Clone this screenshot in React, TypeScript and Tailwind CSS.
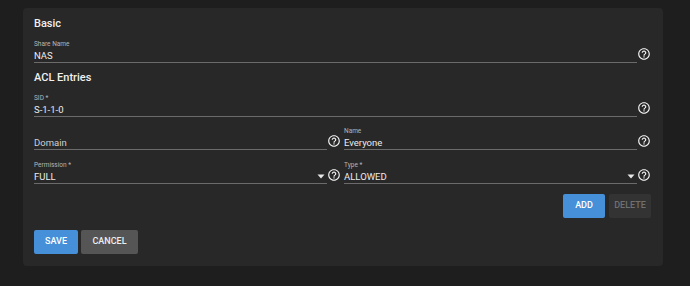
const HELP_PATH =
  "M11 18h2v-2h-2v2zm1-16C6.48 2 2 6.48 2 12s4.48 10 10 10 10-4.48 10-10S17.52 2 12 2zm0 18c-4.41 0-8-3.59-8-8s3.59-8 8-8 8 3.59 8 8-3.59 8-8 8zm0-14c-2.21 0-4 1.79-4 4h2c0-1.1.9-2 2-2s2 .9 2 2c0 2-3 1.75-3 5h2c0-2.25 3-2.5 3-5 0-2.21-1.79-4-4-4z"

function HelpIcon() {
  return (
    <span className="w-[14px] h-[14px] mb-[2px] shrink-0 flex items-center justify-center">
      <svg viewBox="0 0 24 24" width="14" height="14" fill="#f4f4f4">
        <path d={HELP_PATH} />
      </svg>
    </span>
  )
}

type FieldProps = {
  label?: string
  value: string
  placeholder?: boolean
  select?: boolean
}

function Field({ label, value, placeholder = false, select = false }: FieldProps) {
  return (
    <div className="flex items-end flex-1 min-w-0">
      <div className="flex-1 min-w-0 border-b border-[#6b6b6b]">
        <div className="h-[10px] leading-[10px] text-[6.5px] text-[#b5b5b5]">{label ?? ""}</div>
        <div className="h-[13px] flex items-center justify-between">
          <span className={`text-[9.5px] leading-[13px] ${placeholder ? "text-[#d0d0d0]" : "text-[#ececec]"}`}>
            {value}
          </span>
          {select && (
            <svg width="8" height="5" viewBox="0 0 8 5" className="mr-[2px]">
              <path d="M0.5 0.5h7L4 4.5z" fill="#e8e8e8" />
            </svg>
          )}
        </div>
      </div>
      <HelpIcon />
    </div>
  )
}

export default function App() {
  return (
    <div
      className="w-[690px] h-[286px] bg-[#1e1e1e] pt-[8px] pl-[23px]"
      style={{ fontFamily: "Roboto, 'Liberation Sans', sans-serif" }}
    >
      <div className="w-[640px] h-[258px] bg-[#282828] rounded-[4px] pl-[11px] pr-[12px] pt-[7px] flex flex-col">
        {/* Basic */}
        <div className="h-[18px] leading-[18px] text-[11px] font-medium text-[#f0f0f0]">Basic</div>
        <div className="mt-[6px] flex">
          <Field label="Share Name" value="NAS" />
        </div>

        {/* ACL Entries */}
        <div className="mt-[6px] h-[18px] leading-[18px] text-[11px] font-medium text-[#f0f0f0]">ACL Entries</div>
        <div className="mt-[6px] flex">
          <Field label="SID *" value="S-1-1-0" />
        </div>

        <div className="mt-[9px] flex gap-[3px]">
          <Field value="Domain" placeholder />
          <Field label="Name" value="Everyone" />
        </div>

        <div className="mt-[10px] flex gap-[3px]">
          <Field label="Permission *" value="FULL" select />
          <Field label="Type *" value="ALLOWED" select />
        </div>

        <div className="mt-[10px] flex justify-end gap-[4px]">
          <button className="w-[42px] h-[24px] rounded-[2px] bg-[#4590d8] text-white text-[9px] font-medium">
            ADD
          </button>
          <button className="w-[42px] h-[24px] rounded-[2px] bg-[#333333] text-[#707070] text-[9px] font-medium">
            DELETE
          </button>
        </div>

        <div className="mt-[12px] flex gap-[3px]">
          <button className="w-[44px] h-[24px] rounded-[2px] bg-[#4590d8] text-white text-[9px] font-medium">
            SAVE
          </button>
          <button className="w-[57px] h-[24px] rounded-[2px] bg-[#555555] text-[#eeeeee] text-[9px] font-medium">
            CANCEL
          </button>
        </div>
      </div>
    </div>
  )
}
